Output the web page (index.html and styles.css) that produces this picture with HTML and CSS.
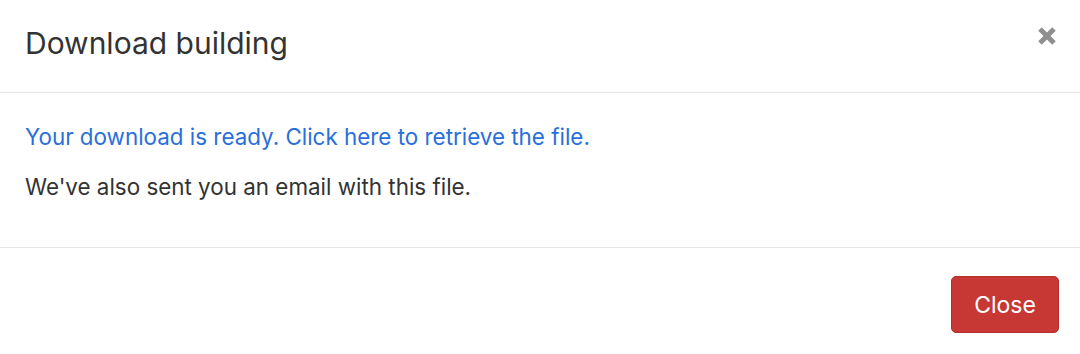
FILE: index.html
```html
<!DOCTYPE html>
<html>
<head>
<meta charset="utf-8">
<link rel="stylesheet" href="styles.css">
</head>
<body>
<div class="modal">
  <div class="modal-header">
    <h4 class="modal-title">Download building</h4>
    <button class="close" aria-label="Close">
      <svg width="20" height="20" viewBox="0 0 20 20"><path d="M3 3 L17 17 M17 3 L3 17" stroke="#8f8f8f" stroke-width="5" stroke-linecap="butt"/></svg>
    </button>
  </div>
  <div class="modal-body">
    <p><a href="#" class="link">Your download is ready. Click here to retrieve the file.</a></p>
    <p>We've also sent you an email with this file.</p>
  </div>
  <div class="modal-footer">
    <button class="btn-danger">Close</button>
  </div>
</div>
</body>
</html>
```
FILE: styles.css
```css
html, body {
  margin: 0;
  padding: 0;
  background: #fff;
}
body {
  font-family: Inter, "Liberation Sans", sans-serif;
  color: #333;
}
.modal {
  width: 1080px;
}
.modal-header {
  height: 93px;
  box-sizing: border-box;
  border-bottom: 1px solid #e5e5e5;
  display: flex;
  align-items: flex-start;
  justify-content: space-between;
  padding: 0 23px 0 25px;
}
.modal-title {
  margin: 0;
  margin-top: 26px;
  font-size: 30px;
  font-weight: 400;
  line-height: 34px;
  color: #333;
}
.close {
  margin-top: 26px;
  padding: 0;
  border: 0;
  background: transparent;
  width: 20px;
  height: 20px;
  display: flex;
}
.modal-body {
  padding: 30px 25px 24px;
  border-bottom: 1px solid #e5e5e5;
  font-size: 22.4px;
  line-height: 28px;
}
.modal-body p {
  margin: 0 0 22px;
}
.link {
  color: #2a6fdb;
  text-decoration: none;
}
.modal-footer {
  display: flex;
  justify-content: flex-end;
  padding: 28px 21px 0 25px;
}
.btn-danger {
  width: 108px;
  height: 57px;
  border: 1px solid #b52f2b;
  border-radius: 5px;
  background: #c73834;
  color: #fff;
  font-family: Inter, "Liberation Sans", sans-serif;
  font-size: 23px;
  padding: 0;
}
```
